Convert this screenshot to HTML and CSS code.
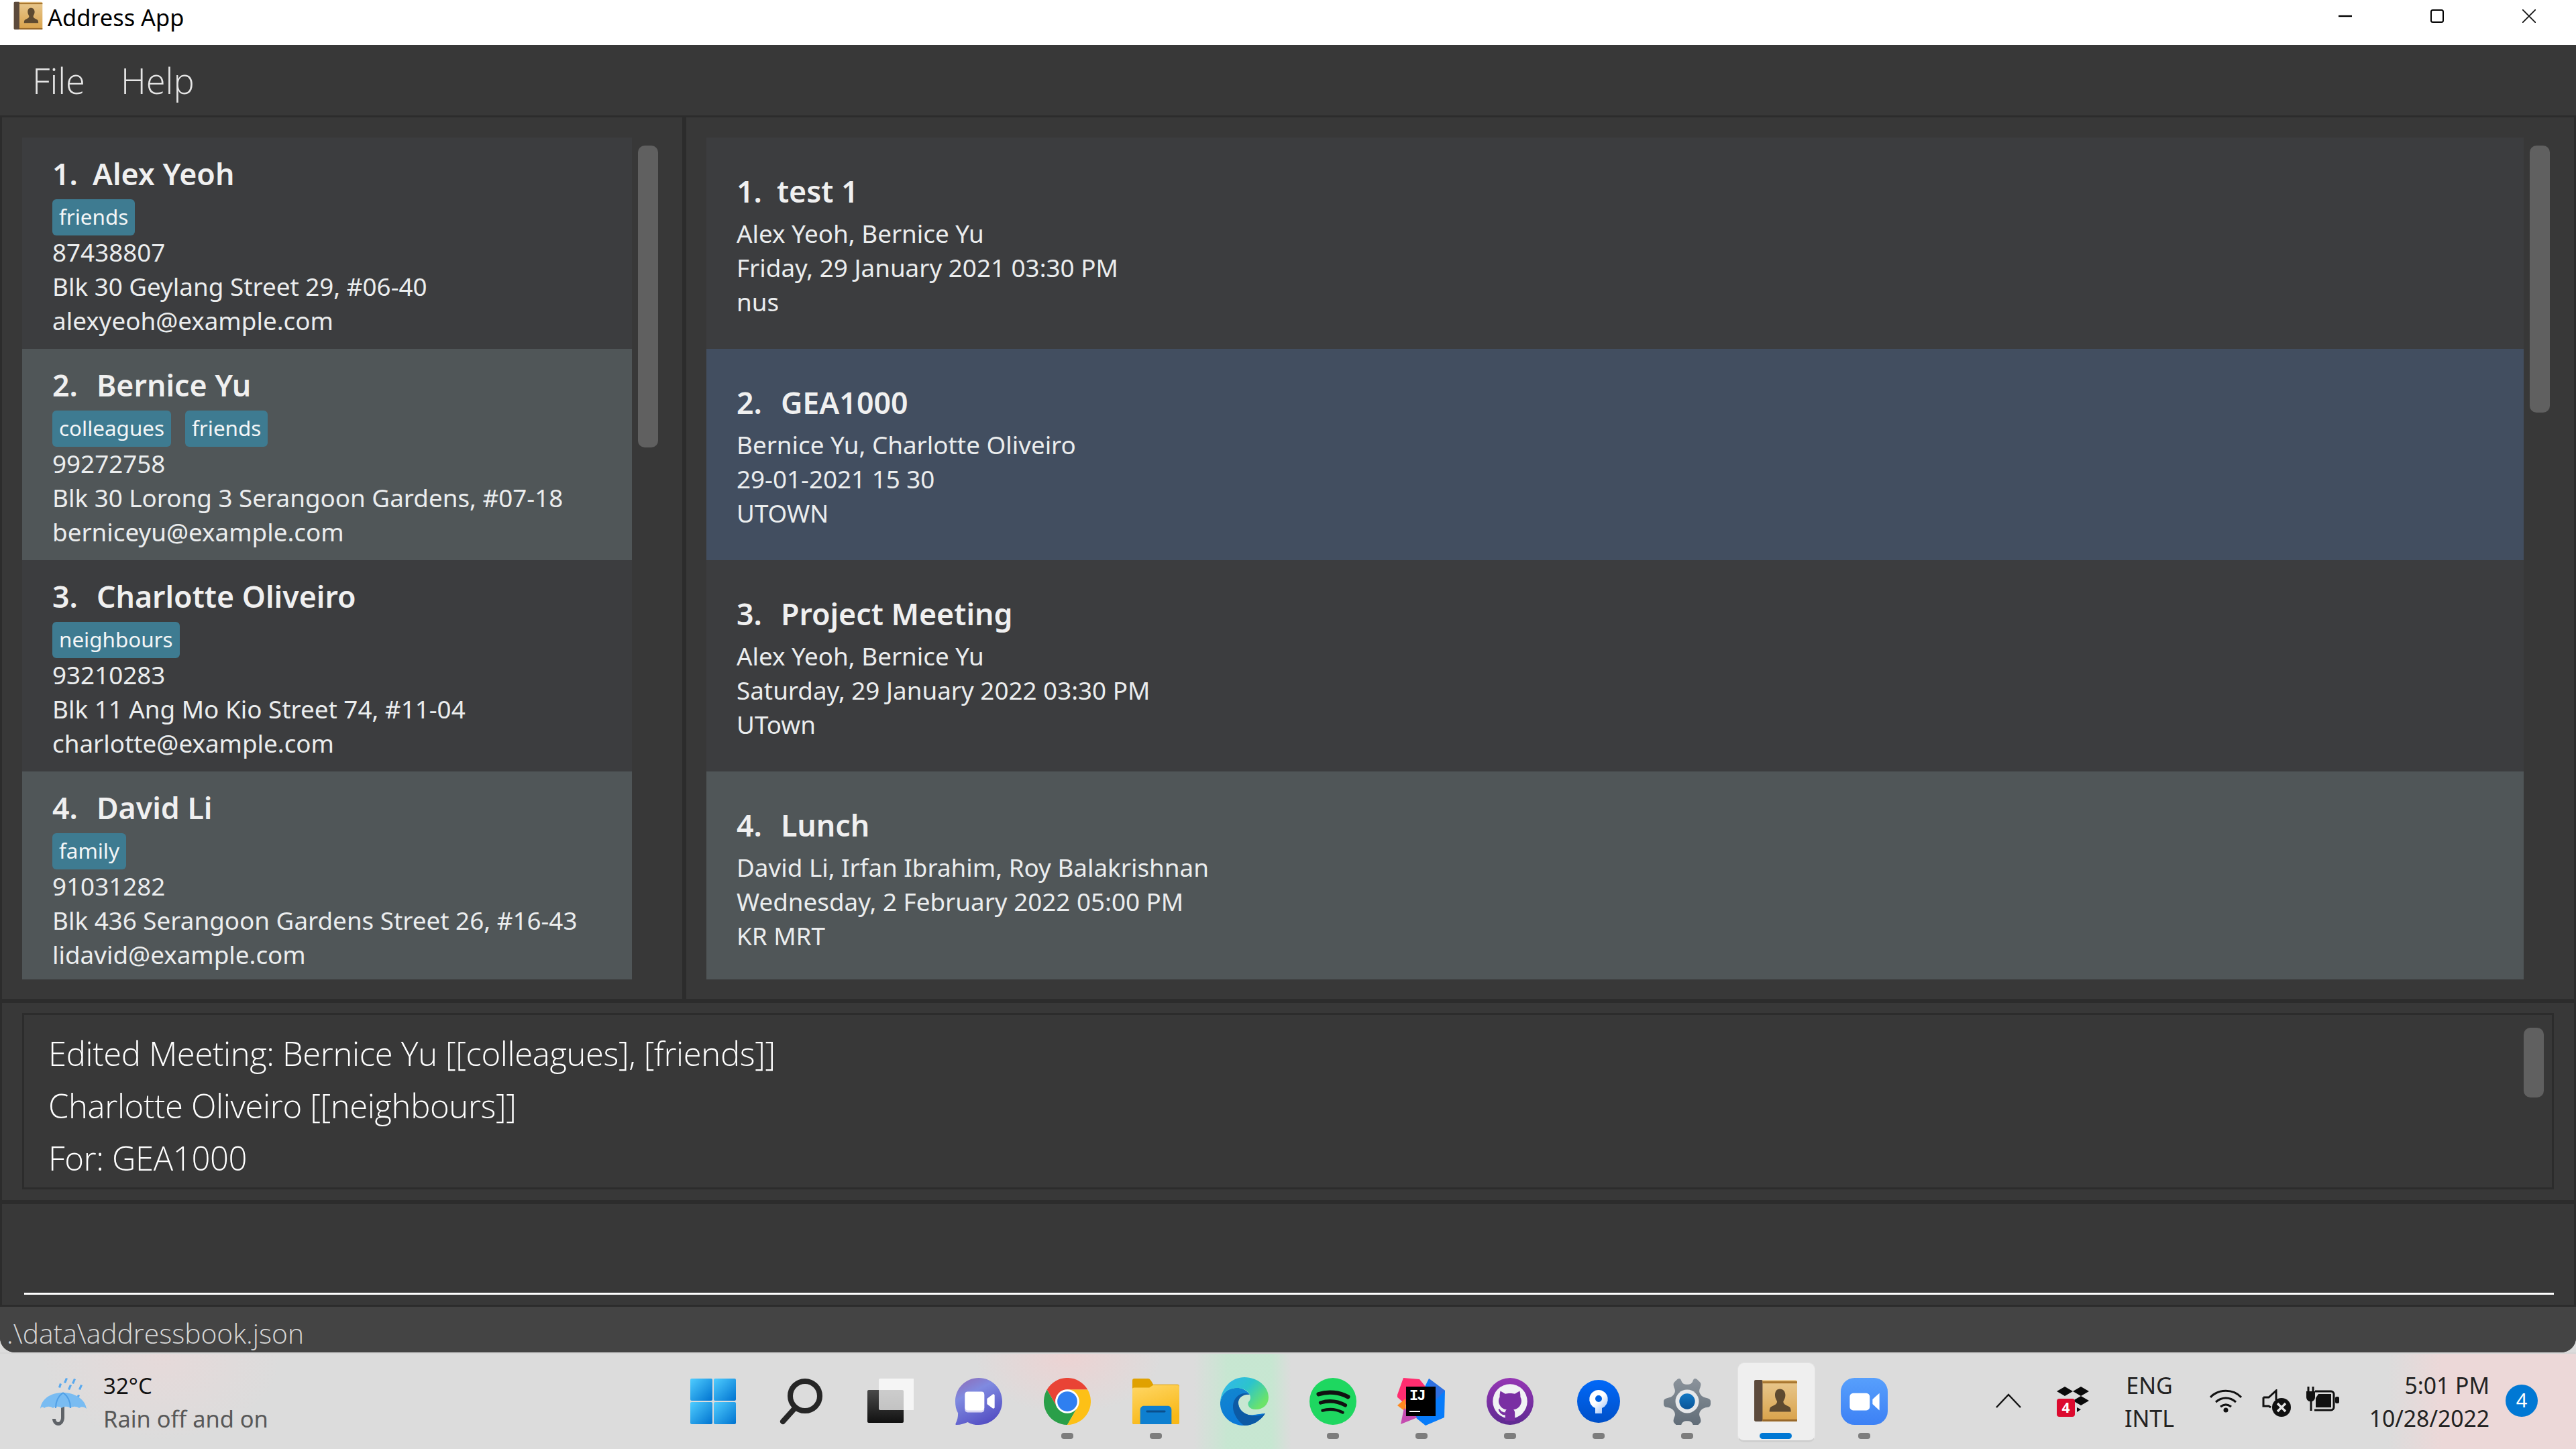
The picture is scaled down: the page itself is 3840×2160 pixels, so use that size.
FILE: index.html
```html
<!DOCTYPE html>
<html lang="en">
<head>
<meta charset="utf-8">
<title>Address App</title>
<link rel="stylesheet" href="styles.css">
</head>
<body>
<svg class="defs" width="0" height="0" aria-hidden="true">
  <defs>
    <linearGradient id="bookBody" x1="0" y1="0" x2="0" y2="1"><stop offset="0" stop-color="#e8c88f"/><stop offset="1" stop-color="#d9a24a"/></linearGradient>
    <linearGradient id="startG" x1="0" y1="0" x2="1" y2="1"><stop offset="0" stop-color="#4fcdff"/><stop offset="1" stop-color="#0073d0"/></linearGradient>
    <linearGradient id="chatG" x1=".1" y1="0" x2=".6" y2="1"><stop offset="0" stop-color="#8e6db8"/><stop offset=".35" stop-color="#7f8ae0"/><stop offset="1" stop-color="#5550c4"/></linearGradient>
    <linearGradient id="edgeTop" x1="0" y1="0" x2="1" y2=".6"><stop offset="0" stop-color="#33b4f0"/><stop offset=".55" stop-color="#2cc4cc"/><stop offset="1" stop-color="#6be36a"/></linearGradient>
    <linearGradient id="edgeLow" x1="0" y1="0" x2=".5" y2="1"><stop offset="0" stop-color="#1287cf"/><stop offset="1" stop-color="#0a78d8"/></linearGradient>
    <linearGradient id="folderG" x1="0" y1="0" x2=".4" y2="1"><stop offset="0" stop-color="#ffd766"/><stop offset="1" stop-color="#f8b818"/></linearGradient>
    <linearGradient id="ghG" x1="0" y1="0" x2="0" y2="1"><stop offset="0" stop-color="#9536b4"/><stop offset="1" stop-color="#5f2a92"/></linearGradient>
    <linearGradient id="stG" x1="0" y1="0" x2="0" y2="1"><stop offset="0" stop-color="#0068f8"/><stop offset="1" stop-color="#0050c8"/></linearGradient>
    <linearGradient id="stW" x1=".2" y1="0" x2="1" y2="1"><stop offset=".4" stop-color="#fff"/><stop offset="1" stop-color="#8db6f5"/></linearGradient>
    <linearGradient id="gearG" x1="0" y1="0" x2="0" y2="1"><stop offset="0" stop-color="#8b939b"/><stop offset="1" stop-color="#5f6b76"/></linearGradient>
    <linearGradient id="gearC" x1="0" y1="0" x2="0" y2="1"><stop offset="0" stop-color="#1378c4"/><stop offset="1" stop-color="#0a5598"/></linearGradient>
    <linearGradient id="zoomG" x1="0" y1="0" x2="0" y2="1"><stop offset="0" stop-color="#579ffc"/><stop offset="1" stop-color="#3d81f5"/></linearGradient>
    <linearGradient id="tvG" x1="0" y1="0" x2="0" y2="1"><stop offset="0" stop-color="#4a4a4a"/><stop offset="1" stop-color="#111"/></linearGradient>
    <symbol id="book" viewBox="0 0 64 64">
      <rect x="1" y="1" width="62" height="60" rx="3" fill="url(#bookBody)"/>
      <rect x="1" y="1" width="12" height="60" rx="2" fill="#5c4a3c"/>
      <rect x="13" y="3" width="50" height="3" fill="#a9772f"/>
      <rect x="13" y="58" width="50" height="3" fill="#98682a"/>
      <path d="M38 14c-5 0-7 4-7 9 0 4 2 7 3 9 0 4-3 5-7 7-3 1-4 3-4 8h31c0-5-1-7-4-8-4-2-7-3-7-7 1-2 3-5 3-9 0-5-3-9-8-9z" fill="#5e4a30"/>
    </symbol>
  </defs>
</svg>

<div class="window">
  <header class="titlebar">
    <svg class="app-icon"><use href="#book"/></svg>
    <span class="app-title">Address App</span>
    <div class="win-buttons">
      <svg class="win-btn" viewBox="0 0 20 20"><path d="M0 10h20" stroke="#000" stroke-width="2.4"/></svg>
      <svg class="win-btn" viewBox="0 0 20 20"><rect x="1" y="1" width="18" height="18" rx="2.5" fill="none" stroke="#000" stroke-width="2"/></svg>
      <svg class="win-btn" viewBox="0 0 20 20"><path d="M0 0l20 20M20 0L0 20" stroke="#111" stroke-width="1.8"/></svg>
    </div>
  </header>

  <nav class="menubar"><span class="menu-item">File</span><span class="menu-item">Help</span></nav>

  <div class="content">
    <div class="panes">
      <section class="pane pane-left">
        <div class="list">
          <article class="card card-odd">
            <h2 class="name"><span class="idx idx-one">1.</span>Alex Yeoh</h2>
            <div class="tags"><span class="tag">friends</span></div>
            <p class="line">87438807</p><p class="line">Blk 30 Geylang Street 29, #06-40</p><p class="line">alexyeoh@example.com</p>
          </article>
          <article class="card card-even">
            <h2 class="name"><span class="idx">2.</span>Bernice Yu</h2>
            <div class="tags"><span class="tag">colleagues</span><span class="tag">friends</span></div>
            <p class="line">99272758</p><p class="line">Blk 30 Lorong 3 Serangoon Gardens, #07-18</p><p class="line">berniceyu@example.com</p>
          </article>
          <article class="card card-odd">
            <h2 class="name"><span class="idx">3.</span>Charlotte Oliveiro</h2>
            <div class="tags"><span class="tag">neighbours</span></div>
            <p class="line">93210283</p><p class="line">Blk 11 Ang Mo Kio Street 74, #11-04</p><p class="line">charlotte@example.com</p>
          </article>
          <article class="card card-even">
            <h2 class="name"><span class="idx">4.</span>David Li</h2>
            <div class="tags"><span class="tag">family</span></div>
            <p class="line">91031282</p><p class="line">Blk 436 Serangoon Gardens Street 26, #16-43</p><p class="line">lidavid@example.com</p>
          </article>
        </div>
        <div class="thumb thumb-left"></div>
      </section>
      <section class="pane pane-right">
        <div class="list">
          <article class="card card-odd meeting">
            <h2 class="name"><span class="idx idx-one">1.</span>test 1</h2>
            <p class="line">Alex Yeoh, Bernice Yu</p><p class="line">Friday, 29 January 2021 03:30 PM</p><p class="line">nus</p>
          </article>
          <article class="card card-selected meeting">
            <h2 class="name"><span class="idx">2.</span>GEA1000</h2>
            <p class="line">Bernice Yu, Charlotte Oliveiro</p><p class="line">29-01-2021 15 30</p><p class="line">UTOWN</p>
          </article>
          <article class="card card-odd meeting">
            <h2 class="name"><span class="idx">3.</span>Project Meeting</h2>
            <p class="line">Alex Yeoh, Bernice Yu</p><p class="line">Saturday, 29 January 2022 03:30 PM</p><p class="line">UTown</p>
          </article>
          <article class="card card-even meeting">
            <h2 class="name"><span class="idx">4.</span>Lunch</h2>
            <p class="line">David Li, Irfan Ibrahim, Roy Balakrishnan</p><p class="line">Wednesday, 2 February 2022 05:00 PM</p><p class="line">KR MRT</p>
          </article>
        </div>
        <div class="thumb thumb-right"></div>
      </section>
    </div>

    <section class="result-pane">
      <div class="result-box">
        <div class="result-text">
          <p>Edited Meeting: Bernice Yu [[colleagues], [friends]]</p>
          <p>Charlotte Oliveiro [[neighbours]]</p>
          <p>For: GEA1000</p>
        </div>
        <div class="thumb thumb-result"></div>
      </div>
    </section>

    <section class="command-pane"><div class="command-line"></div></section>
    <footer class="status">.\data\addressbook.json</footer>
  </div>
</div>

<div class="taskbar">
  <div class="weather">
    <svg class="umbrella" viewBox="0 0 72 74">
      <g fill="#5aa9ee"><path d="M38 2l3 1-3 7-3-1zM50 3l3 1-3 7-3-1zM29 10l3 1-2 6-3-1zM44 12l3 1-3 7-3-1zM60 12l3 1-3 7-3-1zM56 27l3 1-3 7-3-1z"/></g>
      <path d="M34 24c2 0 2 2 2 3v34c0 5 -3 12 -9 12s-9-6-9-10h5c0 3 2 5 4 5s4-3 4-7V27c0-1 1-3 3-3z" fill="#5f6368"/>
      <path d="M0 48C2 34 14 24 34 24c18 0 33 10 35 24-3-3-8-4-11-1-4-3-10-3-13 0-4-3-10-3-13 0-4-3-9-3-13 0-4-3-9-3-13 0-2-2-4-2-6 1z" fill="#79bcf2"/>
      <path d="M34 24c-7 5-11 13-11 23M34 24c7 5 11 13 11 23" stroke="#4f9fe6" stroke-width="2" fill="none"/>
    </svg>
    <div class="weather-text"><span class="temp">32°C</span><span class="cond">Rain off and on</span></div>
  </div>

  <div class="apps">
    <div class="slot"><svg class="ico" viewBox="0 0 70 70"><g fill="url(#startG)"><rect x="1" y="1" width="33" height="33" rx="2"/><rect x="36" y="1" width="33" height="33" rx="2"/><rect x="1" y="36" width="33" height="33" rx="2"/><rect x="36" y="36" width="33" height="33" rx="2"/></g></svg></div>
    <div class="slot"><svg class="ico" viewBox="0 0 70 70"><circle cx="40" cy="27" r="22" fill="none" stroke="#262626" stroke-width="8"/><path d="M25 45L7 65" stroke="#262626" stroke-width="8" stroke-linecap="round"/></svg></div>
    <div class="slot"><svg class="ico" viewBox="0 0 70 70"><rect x="1" y="18" width="54" height="49" rx="2" fill="url(#tvG)"/><rect x="18" y="1" width="53" height="47" rx="2" fill="#fff" fill-opacity=".72"/></svg></div>
    <div class="slot"><svg class="ico" viewBox="0 0 68 68"><path d="M34 0c19 0 34 15 34 34S53 68 34 68c-6 0-11-1-16-4-5 2-10 4-16 4-2 0-2-1-1-3 2-4 3-8 3-14C1 46 0 40 0 34 0 15 15 0 34 0z" fill="url(#chatG)"/><rect x="14" y="21" width="28" height="29" rx="4" fill="#d9d6f2"/><rect x="14" y="20" width="28" height="27" rx="4" fill="#fff"/><path d="M46 30l8-6c1-1 3 0 3 1v18c0 1-2 2-3 1l-8-6z" fill="#fff"/></svg></div>
    <div class="slot dotted"><svg class="ico" viewBox="0 0 48 48"><path d="M3.2 12A24 24 0 0 1 44.8 12H24A12 12 0 0 0 13.6 30Z" fill="#e94335"/><path d="M3.2 12A24 24 0 0 0 24 48L34.4 30H13.6Z" fill="#2a9f49"/><path d="M44.8 12A24 24 0 0 1 24 48L34.4 30L24 12Z" fill="#fdc016"/><circle cx="24" cy="24" r="12.2" fill="#fff"/><circle cx="24" cy="24" r="10.2" fill="#2f7ff0"/></svg></div>
    <div class="slot dotted"><svg class="ico" viewBox="0 0 72 72"><path d="M0 4c0-2 1-3 3-3h21c2 0 3 1 5 4l3 5h37c2 0 3 1 3 3v56c0 1-1 2-3 2H2c-1 0-2-1-2-2z" fill="#e0a100"/><path d="M0 17c0-1 1-2 3-2h23l6-4h37c2 0 3 1 3 3v54c0 2-1 3-3 3H3c-2 0-3-1-3-3z" fill="url(#folderG)"/><path d="M12 71V49c0-4 3-6 6-6h36c3 0 6 2 6 6v22z" fill="#0e7fd0"/><rect x="21" y="50" width="30" height="3" rx="1.5" fill="#0a4f8c"/></svg></div>
    <div class="slot"><svg class="ico edge-ico" viewBox="0 0 72 72"><path d="M0 37C2 25 10 17 22 16C32 15 40 20 44 26C36 24 28 28 27 36C26 48 36 58 50 56C58 55 64 54 67 54C60 65 48 72 36 72C14 72-1 55 0 37Z" fill="url(#edgeLow)"/><path d="M44 26C34 20 20 28 19 42C18 56 30 69 36 72C48 72 60 65 67 54C60 58 52 58 46 57C34 55 26 46 27 37C28 29 36 25 44 26Z" fill="#0c5aa5"/><path d="M0 37C2 14 18 0 36 0C56 0 72 14 72 30C72 42 62 49 52 48C44 48 40 42 42 37C46 33 46 28 42 23C36 16 26 15 18 17C8 19 2 27 0 37Z" fill="url(#edgeTop)"/></svg></div>
    <div class="slot dotted"><svg class="ico" viewBox="0 0 72 72"><circle cx="36" cy="36" r="36" fill="#1ed760"/><g fill="none" stroke="#111" stroke-linecap="round"><path d="M14 25c15-5 32-3 45 4" stroke-width="6.5"/><path d="M17 38c13-4 27-2 38 4" stroke-width="5.5"/><path d="M20 50c10-3 21-2 31 3" stroke-width="4.5"/></g></svg></div>
    <div class="slot dotted"><div class="ij">
      <svg class="ij-bg" viewBox="0 0 72 72"><path d="M47 2l24 18-1 40-28 12-15-12 10-38z" fill="#087cfa"/><path d="M47 2l24 18-20 20z" fill="#2f6fe0"/><path d="M9 1l24 2 9 11-14 36-14-8-15-13z" fill="#ff2d6f"/><path d="M0 42l12-10 1 20z" fill="#ff8a1f"/><path d="M5 70l5-24 20 14z" fill="#c54bb0"/></svg>
      <div class="ij-box"><span class="ij-text">IJ</span><span class="ij-bar"></span></div>
    </div></div>
    <div class="slot dotted"><svg class="ico" viewBox="0 0 68 68"><circle cx="34" cy="34" r="34" fill="url(#ghG)"/><circle cx="34" cy="34" r="25" fill="#f1f2f4"/><path d="M20 19L27 23C31 22 37 22 41 23L48 19C49 23 49 26 49 28C51 31 51 36 49 39C47 43 44 45 39 46C41 48 41 50 41 52V62H27V54C22 54 19 51 17 46L19 45C21 49 24 50 27 50C27 48 28 47 29 46C24 45 21 43 19 39C17 36 17 31 19 28C19 26 19 23 20 19Z" fill="#7a2fa3"/></svg></div>
    <div class="slot dotted"><svg class="ico" viewBox="-3 -3 70 70"><circle cx="32" cy="32" r="32" fill="url(#stG)"/><path d="M32 15a14 14 0 0 1 5 27v8H27v-8a14 14 0 0 1 5-27z" fill="url(#stW)"/><circle cx="32" cy="28" r="5" fill="#0060e0"/></svg></div>
    <div class="slot dotted"><svg class="ico" viewBox="0 0 72 72"><path d="M21 2c3-2 5-1 6 2 1 4 4 6 9 6s8-2 9-6c1-3 3-4 6-2l4 4c3 3 2 5 1 9-2 4-2 7 1 11 2 3 5 4 10 5 3 1 5 2 5 5v4c0 3-2 5-5 5-5 1-8 2-10 5-3 4-3 7-1 11 1 4 2 6-1 9l-4 4c-3 2-5 1-6-2-1-4-4-6-9-6s-8 2-9 6c-1 3-3 4-6 2l-4-4c-3-3-2-5-1-9 2-4 2-7-1-11-2-3-5-4-10-5-3 0-5-2-5-5v-4c0-3 2-4 5-5 5-1 8-2 10-5 3-4 3-7 1-11-1-4-2-6 1-9z" fill="url(#gearG)"/><circle cx="36" cy="36" r="18" fill="#e6e8ea"/><circle cx="36" cy="36" r="12" fill="url(#gearC)"/></svg></div>
    <div class="slot active"><svg class="ico book-ico"><use href="#book"/></svg><span class="active-bar"></span></div>
    <div class="slot dotted"><svg class="ico" viewBox="0 0 68 68"><rect width="68" height="68" rx="20" fill="url(#zoomG)"/><rect x="13" y="22" width="29" height="25" rx="5" fill="#fff"/><path d="M46 31l10-9v25l-10-9z" fill="#fff"/></svg></div>
  </div>

  <div class="tray">
    <svg class="chev" viewBox="0 0 38 22"><path d="M1 21L19 2l18 19" fill="none" stroke="#111" stroke-width="2.4"/></svg>
    <div class="dropbox">
      <svg class="dropbox-svg" viewBox="0 0 48 46"><path d="M0 7L12 0l12 7-12 7zM24 7L36 0l12 7-12 7zM24 21l12-7 12 7-12 7zM30 31l6 3-6 4z" fill="#0a0a0a"/></svg>
      <span class="dropbox-badge">4</span>
    </div>
    <div class="lang"><span>ENG</span><span>INTL</span></div>
    <svg class="wifi" viewBox="0 0 48 36" fill="none" stroke="#111" stroke-width="3.2"><path d="M1 13C13 0 35 0 47 13M9 20c9-8 21-8 30 0M16 27c5-4 11-4 16 0"/><circle cx="24" cy="32" r="3.5" fill="#111" stroke="none"/></svg>
    <svg class="sound" viewBox="0 0 46 42"><path d="M2 12h8L21 2v14M2 12v13h8l3 2" fill="none" stroke="#111" stroke-width="3"/><circle cx="29" cy="27" r="14" fill="#111"/><path d="M23 21l12 12M35 21L23 33" stroke="#e4e4e4" stroke-width="3.4"/></svg>
    <svg class="battery" viewBox="0 0 50 38"><path d="M3 0v8M10 0v8" fill="none" stroke="#111" stroke-width="3"/><path d="M0 7h13v9c0 3-2 5-4 6H4c-2-1-4-3-4-6z" fill="#111"/><path d="M7 20v16" fill="none" stroke="#111" stroke-width="3"/><path d="M13 7h24c2 0 4 2 4 4v20c0 2-2 4-4 4H12" fill="none" stroke="#111" stroke-width="3"/><path d="M18 11h19v20H14V17z" fill="#111"/><rect x="43" y="15" width="6" height="10" rx="2" fill="#111"/></svg>
    <div class="clock"><span>5:01 PM</span><span>10/28/2022</span></div>
    <span class="notif">4</span>
  </div>
</div>
</body>
</html>
```

FILE: styles.css
```css
* { box-sizing: border-box; margin: 0; padding: 0; }
html, body { width: 3840px; height: 2160px; overflow: hidden; }
body { background: #dcdcdc; font-family: "Noto Sans", "Open Sans", sans-serif; display: flex; flex-direction: column; }
.defs { position: absolute; }

.window { height: 2016px; flex: none; display: flex; flex-direction: column; background: #2c2c2c; border-radius: 0 0 22px 22px; overflow: hidden; }

.titlebar { height: 67px; flex: none; background: #fff; display: flex; align-items: center; padding-left: 20px; }
.app-icon { width: 44px; height: 44px; margin-top: -20px; margin-right: 7px; }
.app-title { font-size: 34.4px; color: #000; margin-top: -15px; line-height: 50px; }
.win-buttons { margin-left: auto; display: flex; gap: 117px; padding-right: 60px; margin-top: -19px; }
.win-btn { width: 20px; height: 20px; }

.menubar { height: 105px; flex: none; background: #383838; display: flex; gap: 53px; padding-left: 48px; align-items: center; }
.menu-item { font-family: "Open Sans", sans-serif; font-weight: 300; font-size: 52.5px; color: #e6e6e6; line-height: 70px; }

.content { flex: 1; display: flex; flex-direction: column; padding: 3px 3px 0; min-height: 0; }
.panes { display: flex; gap: 6px; height: 1314px; flex: none; }
.pane { background: #383838; display: flex; padding: 30px 0 0 30px; height: 100%; }
.pane-left { width: 1014px; }
.pane-right { flex: 1; }
.list { height: 1255px; overflow: hidden; flex: none; }
.pane-left .list { width: 909px; }
.pane-right .list { width: 2709px; }

.card { height: 315px; padding: 22px 0 0 45px; color: #ebedee; overflow: hidden; }
.card-odd { background: #3c3d3f; }
.card-even { background: #505658; }
.card-selected { background: #424e60; }
.meeting { padding: 48px 0 0 45px; }

.name { font-weight: 600; font-size: 44.7px; line-height: 64px; color: #f0f0f0; display: flex; }
.idx { margin-right: 28px; }
.idx-one { margin-right: 22px; }
.tags { display: flex; gap: 21px; margin-top: 6px; height: 54px; }
.tag { background: #3e7b91; color: #f4f6f7; border-radius: 6px; font-size: 31.4px; line-height: 50px; height: 54px; padding: 1px 10px 0; }
.line { font-size: 36.8px; line-height: 51px; white-space: nowrap; }
.meeting .name { margin-bottom: 6px; }

.thumb { background: #606060; width: 30px; flex: none; border-radius: 10px; }
.thumb-left { height: 450px; margin: 12px 0 0 9px; }
.thumb-right { height: 398px; margin: 12px 0 0 9px; }
.thumb-result { height: 104px; margin: 19px 0 0 auto; }

.result-pane { height: 294px; flex: none; margin-top: 6px; background: #383838; padding: 15px 30px 16px 30px; }
.result-box { height: 100%; border: 3px solid #2c2c2c; display: flex; padding-right: 12px; }
.result-text { padding: 18px 0 0 36px; color: #fff; font-family: "Open Sans", sans-serif; font-weight: 300; font-size: 49px; letter-spacing: -.37px; line-height: 78px; white-space: nowrap; }

.command-pane { height: 150px; flex: none; margin-top: 6px; background: #383838; padding: 132px 30px 0 33px; }
.command-line { height: 3px; background: #fff; }

.status { height: 68px; flex: none; margin: 3px -3px 0; background: #444; color: #d8d8d8; font-family: "Open Sans", sans-serif; font-weight: 300; font-size: 40.8px; line-height: 49px; padding: 15px 0 0 10px; }

.taskbar { height: 144px; flex: none; display: flex; border-top: 2px solid #d6d6d6;
  background:
    radial-gradient(ellipse 140px 90px at 1592px 0, rgba(246,205,205,.65), transparent),
    radial-gradient(ellipse 180px 130px at 240px 0, rgba(240,215,215,.5), transparent),
    linear-gradient(90deg, transparent 1780px, rgba(190,235,205,.7) 1830px, rgba(190,235,205,.7) 1895px, transparent 1925px),
    linear-gradient(90deg, transparent 3560px, rgba(240,215,215,.8) 3640px),
    #dcdcdc; }

.weather { width: 997px; flex: none; display: flex; padding: 34px 0 0 60px; gap: 22px; }
.umbrella { width: 72px; height: 74px; flex: none; }
.weather-text { display: flex; flex-direction: column; line-height: 49px; margin-top: -11px; }
.temp { color: #111; font-size: 33px; }
.cond { color: #585858; font-size: 34.4px; }

.apps { display: flex; flex: none; }
.slot { width: 132px; height: 142px; display: flex; flex-direction: column; align-items: center; padding-top: 36px; position: relative; }
.ico { width: 70px; height: 70px; display: block; }
.edge-ico { width: 72px; height: 72px; margin-top: -1px; }
.dotted::after { content: ""; position: absolute; left: 57px; top: 118px; width: 18px; height: 9px; border-radius: 4px; background: #7d7d7d; }
.active::before { content: ""; position: absolute; left: 9px; top: 13px; width: 114px; height: 115px; background: #efefef; border-radius: 10px; border: 1px solid #e4e4e4; border-bottom: 3px solid #cfcfcf; }
.book-ico { position: relative; width: 66px; height: 66px; margin-top: 2px; }
.active-bar { position: absolute; left: 42px; top: 118px; width: 48px; height: 9px; background: #0078d4; border-radius: 5px; }

.ij { width: 72px; height: 72px; position: relative; margin-top: -1px; }
.ij-bg { width: 72px; height: 72px; display: block; }
.ij-box { position: absolute; left: 13px; top: 14px; width: 44px; height: 44px; background: #000; display: flex; flex-direction: column; padding: 3px 0 0 5px; }
.ij-text { font-family: "Liberation Mono", monospace; font-weight: 700; font-size: 22px; line-height: 24px; color: #fff; letter-spacing: -2px; }
.ij-bar { width: 16px; height: 2px; background: #fff; margin-top: 9px; }

.tray { flex: 1; position: relative; display: flex; padding-left: 130px; }
.chev { width: 38px; height: 22px; margin-top: 59px; flex: none; }
.dropbox { width: 48px; height: 46px; margin: 49px 0 0 53px; flex: none; position: relative; }
.dropbox-svg { width: 48px; height: 46px; display: block; }
.dropbox-badge { position: absolute; left: 0; top: 18px; width: 27px; height: 27px; background: #dc0a2e; border-radius: 4px; color: #fff; font-size: 21px; font-weight: 700; line-height: 27px; text-align: center; }
.lang { display: flex; flex-direction: column; align-items: center; width: 72px; margin: 23px 0 0 54px; font-size: 34px; line-height: 49px; color: #222; flex: none; }
.wifi { width: 48px; height: 36px; margin: 52px 0 0 54px; flex: none; }
.sound { width: 46px; height: 42px; margin: 53px 0 0 30px; flex: none; }
.battery { width: 50px; height: 38px; margin: 49px 0 0 20px; flex: none; }
.clock { width: 220px; margin: 23px 0 0 3px; display: flex; flex-direction: column; align-items: flex-end; font-size: 33.7px; line-height: 49px; color: #222; flex: none; }
.notif { width: 48px; height: 48px; margin: 46px 0 0 24px; border-radius: 50%; background: #0078d4; color: #fff; font-size: 29px; line-height: 46px; text-align: center; flex: none; }
```
